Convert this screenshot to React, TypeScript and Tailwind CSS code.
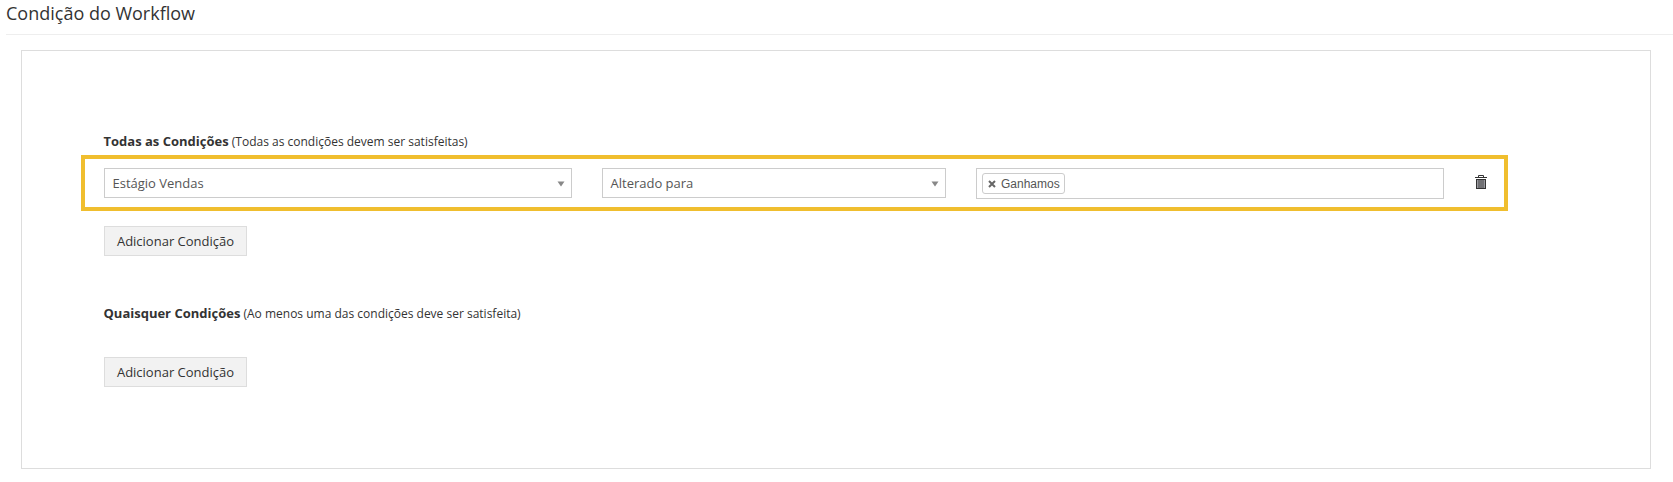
import React from "react";

function Chevron() {
  return (
    <svg width="8" height="6" viewBox="0 0 8 6" className="shrink-0">
      <path d="M0.5 0.5H7.5L4 5.5Z" fill="#888888" />
    </svg>
  );
}

function Cross() {
  return (
    <svg width="8" height="8" viewBox="0 0 8 8" className="shrink-0">
      <path d="M1 1L7 7M7 1L1 7" stroke="#666666" strokeWidth="2" />
    </svg>
  );
}

function Trash() {
  return (
    <svg width="12" height="14" viewBox="0 0 12 14" className="shrink-0">
      <path d="M3.5 2V0.5H8.5V2" fill="none" stroke="#333" strokeWidth="1" />
      <rect x="0" y="2" width="12" height="1" fill="#333" />
      <rect x="1.5" y="4.5" width="9" height="9" fill="#9a9aa0" stroke="#333" strokeWidth="1" />
      <path d="M4 5V13M6 5V13M8 5V13" stroke="#333" strokeWidth="0.8" />
    </svg>
  );
}

function Select({ label, className }: { label: string; className: string }) {
  return (
    <div className={`flex h-[30px] items-center justify-between border border-[#cccccc] bg-white pl-[7.5px] pr-[6px] pt-[2px] text-[13px] text-[#555555] ${className}`}>
      <span>{label}</span>
      <Chevron />
    </div>
  );
}

function AddButton() {
  return (
    <button className="block h-[30px] w-[143px] border border-[#dddddd] bg-[#f2f2f2] pt-[2px] text-center text-[13px] text-[#333333]">
      Adicionar Condição
    </button>
  );
}

export default function App() {
  return (
    <div className="h-[482px] w-[1673px] overflow-hidden bg-white pl-[6px] font-['Open_Sans',sans-serif] text-[#333333]">
      <div className="h-[35px] border-b border-[#eeeeee] text-[18px] leading-[26px]">Condição do Workflow</div>
      <div className="ml-[15px] mt-[15px] h-[419px] w-[1630px] border border-[#dddddd] pl-[59px] pt-[80px]">
        <p className="ml-[22.5px] h-[24px] text-[12px] leading-[20px]">
          <b className="text-[13px] font-bold">Todas as Condições</b> (Todas as condições devem ser satisfeitas)
        </p>
        <div className="flex h-[56px] w-[1427px] items-start border-4 border-[#f0be2e] pl-[19px] pt-[9px]">
          <Select label="Estágio Vendas" className="w-[468px]" />
          <Select label="Alterado para" className="ml-[30px] w-[344px]" />
          <div className="ml-[30px] flex h-[31px] w-[468px] items-center border border-[#cccccc] pl-[5px]">
            <span className="flex h-[21px] items-center gap-[5px] rounded-[3px] border border-[#cccccc] pl-[5px] pr-[4px] font-['Liberation_Sans',sans-serif] text-[12px] text-[#555555]">
              <Cross />
              Ganhamos
            </span>
          </div>
          <div className="ml-[31px] mt-[7px]">
            <Trash />
          </div>
        </div>
        <div className="ml-[23px] mt-[15px]">
          <AddButton />
        </div>
        <p className="ml-[22.5px] mt-[47px] h-[20px] text-[12px] leading-[20px]">
          <b className="text-[13px] font-bold">Quaisquer Condições</b> (Ao menos uma das condições deve ser satisfeita)
        </p>
        <div className="ml-[23px] mt-[34px]">
          <AddButton />
        </div>
      </div>
    </div>
  );
}
